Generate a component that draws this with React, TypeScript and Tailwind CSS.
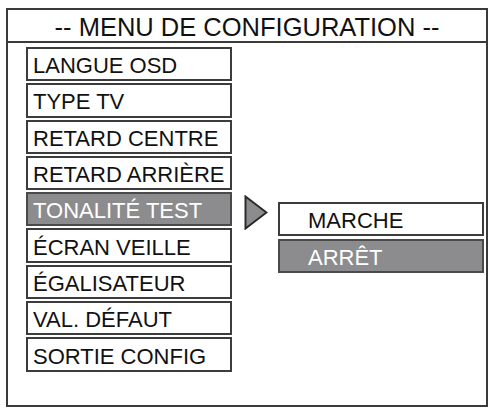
import React from 'react';

const items = [
  'LANGUE OSD',
  'TYPE TV',
  'RETARD CENTRE',
  'RETARD ARRIÈRE',
  'TONALITÉ TEST',
  'ÉCRAN VEILLE',
  'ÉGALISATEUR',
  'VAL. DÉFAUT',
  'SORTIE CONFIG',
];

const selected = 'TONALITÉ TEST';

export default function App() {
  return (
    <div className="w-[490px] h-[409px] bg-white pt-[8px] pl-[6px]" style={{ fontFamily: '"Liberation Sans", Arial, sans-serif' }}>
      <div className="w-[482px] h-[399px] border-2 border-[#3a3a3a] flex flex-col">
        {/* Header */}
        <div className="h-[33px] border-b-2 border-[#3a3a3a] flex items-center justify-center text-[25.5px] leading-none text-[#111] pt-[4px]">
          -- MENU DE CONFIGURATION --
        </div>

        {/* Body */}
        <div className="flex pt-[4px] pl-[18px]">
          <div className="flex flex-col gap-[2px] w-[206px]">
            {items.map((label) => (
              <div
                key={label}
                className={
                  label === selected
                    ? 'h-[34.3px] border-2 border-[#4a4a4a] bg-[#8c8c8e] text-white flex items-center pl-[5px] text-[22px] leading-none'
                    : 'h-[34.3px] border-2 border-[#3c3c3c] bg-white text-[#111] flex items-center pl-[5px] text-[22px] leading-none'
                }
              >
                <span className="pt-[4px]">{label}</span>
              </div>
            ))}
          </div>

          {/* Arrow */}
          <div className="ml-[12px] pt-[148px]">
            <svg width="24" height="35" viewBox="0 0 24 35">
              <polygon points="1.5,1.5 22.5,17.5 1.5,33.5" fill="#8c8c8e" stroke="#2a2a2a" strokeWidth="2" strokeLinejoin="miter" />
            </svg>
          </div>

          {/* Submenu */}
          <div className="ml-[10px] pt-[155px] flex flex-col gap-[3px] w-[206px]">
            <div className="h-[34px] border-2 border-[#3c3c3c] bg-white text-[#111] flex items-center pl-[28px] text-[22px] leading-none">
              <span className="pt-[4px]">MARCHE</span>
            </div>
            <div className="h-[34px] border-2 border-[#4a4a4a] bg-[#8c8c8e] text-white flex items-center pl-[28px] text-[22px] leading-none">
              <span className="pt-[4px]">ARRÊT</span>
            </div>
          </div>
        </div>
      </div>
    </div>
  );
}
